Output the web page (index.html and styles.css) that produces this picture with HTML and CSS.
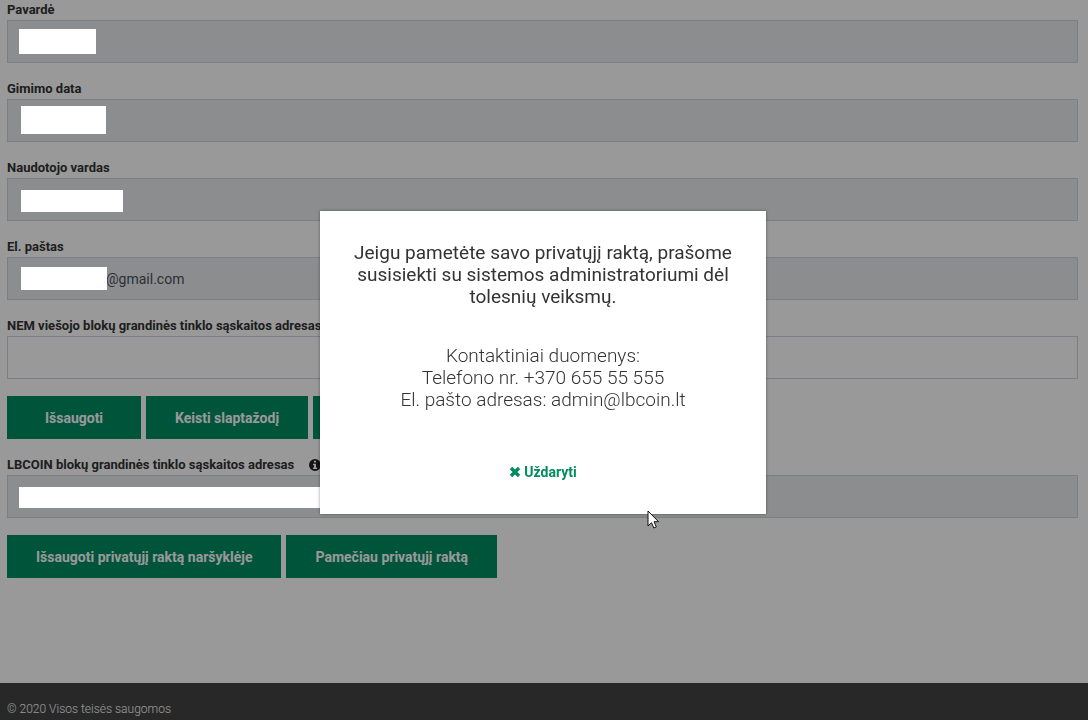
FILE: index.html
```html
<!DOCTYPE html>
<html lang="lt">

<head>
    <meta charset="UTF-8">
    <meta name="viewport" content="width=device-width, initial-scale=1.0">
    <title>LBCOIN</title>
    <link rel="stylesheet" href="styles.css">
</head>

<body>
    <main class="profile">
        <form>
            <div class="field">
                <label for="surname">Pavardė</label>
                <div class="control">
                    <input type="text" id="surname" disabled>
                    <span class="mask mask-surname"></span>
                </div>
            </div>
            <div class="field">
                <label for="birth">Gimimo data</label>
                <div class="control">
                    <input type="text" id="birth" disabled>
                    <span class="mask mask-birth"></span>
                </div>
            </div>
            <div class="field">
                <label for="username">Naudotojo vardas</label>
                <div class="control">
                    <input type="text" id="username" disabled>
                    <span class="mask mask-username"></span>
                </div>
            </div>
            <div class="field">
                <label for="email">El. paštas</label>
                <div class="control">
                    <input type="text" id="email" class="email" value="@gmail.com" disabled>
                    <span class="mask mask-email"></span>
                </div>
            </div>
            <div class="field">
                <label for="nem">NEM viešojo blokų grandinės tinklo sąskaitos adresas</label>
                <div class="control">
                    <input type="text" id="nem">
                </div>
            </div>
            <div class="actions">
                <button type="button" class="btn">Išsaugoti</button>
                <button type="button" class="btn">Keisti slaptažodį</button>
                <button type="button" class="btn" aria-label="Atšaukti"></button>
            </div>
            <div class="field">
                <label for="lbcoin">LBCOIN blokų grandinės tinklo sąskaitos adresas
                    <svg class="info" viewBox="0 0 12 12" aria-hidden="true">
                        <path fill-rule="evenodd" d="M6 0a6 6 0 1 0 0 12A6 6 0 0 0 6 0zM5 1.8h2v1.7H5zM4 4.8h3v3.7h1V10H4V8.500h1V6.200H4z"/>
                    </svg>
                </label>
                <div class="control">
                    <input type="text" id="lbcoin" disabled>
                    <span class="mask mask-lbcoin"></span>
                </div>
            </div>
            <div class="actions">
                <button type="button" class="btn">Išsaugoti privatųjį raktą naršyklėje</button>
                <button type="button" class="btn">Pamečiau privatųjį raktą</button>
            </div>
        </form>
    </main>
    <footer class="footer">© 2020 Visos teisės saugomos</footer>

    <div class="backdrop"></div>
    <div class="modal-wrap">
        <div class="modal" role="dialog" aria-modal="true" aria-labelledby="modal-title">
            <h2 id="modal-title">Jeigu pametėte savo privatųjį raktą, prašome susisiekti su sistemos administratoriumi dėl tolesnių veiksmų.</h2>
            <p>Kontaktiniai duomenys:<br>Telefono nr. +370 655 55 555<br>El. pašto adresas: admin@lbcoin.lt</p>
            <button type="button" class="close">
                <svg viewBox="0 0 12 12" aria-hidden="true">
                    <path d="M3.200.8L6 3.600 8.800.8l2.400 2.400L8.400 6l2.800 2.800-2.400 2.400L6 8.400l-2.800 2.800L.8 8.800 3.600 6 .8 3.200z"/>
                </svg>
                Uždaryti
            </button>
        </div>
    </div>
    <svg class="cursor" viewBox="0 0 12 19" aria-hidden="true">
        <path d="M1 1v15l3.500-3.300 2.300 5.300 2.500-1.100L7 11.700h4.500z"/>
    </svg>
</body>

</html>
```

FILE: styles.css
```css
* {
    box-sizing: border-box;
}

body {
    margin: 0;
    min-height: 100vh;
    display: flex;
    flex-direction: column;
    font-family: Roboto, "Liberation Sans", sans-serif;
    font-size: 14px;
    color: #333;
    background-color: #fff;
}

.profile {
    flex: 1;
    padding: 0 10px 0 7px;
}

.field {
    margin-bottom: 16px;
}

label {
    display: flex;
    align-items: center;
    gap: 15px;
    font-size: 13px;
    font-weight: 700;
    line-height: 20px;
}

.info {
    width: 12px;
    height: 12px;
    fill: #222;
}

.control {
    position: relative;
}

input {
    display: block;
    width: 100%;
    height: 43px;
    padding: 0 12px;
    border: 1px solid #ced4da;
    font-family: inherit;
    font-size: 14px;
    color: #495057;
    background-color: #fff;
}

input:disabled {
    background-color: #e9ecef;
}

.email {
    padding-left: 98px;
}

/* covers for private values, kept above the backdrop */
.mask {
    position: absolute;
    z-index: 11;
    background-color: #fff;
}

.mask-surname {
    left: 12px;
    top: 9px;
    width: 77px;
    height: 25px;
}

.mask-birth {
    left: 14px;
    top: 7px;
    width: 85px;
    height: 28px;
}

.mask-username {
    left: 14px;
    top: 12px;
    width: 102px;
    height: 22px;
}

.mask-email {
    left: 14px;
    top: 10px;
    width: 86px;
    height: 23px;
}

.mask-lbcoin {
    left: 12px;
    top: 12px;
    width: 40%;
    height: 21px;
}

.actions {
    display: flex;
    gap: 5px;
    margin: 17px 0 16px;
}

.btn {
    min-width: 134px;
    height: 43px;
    padding: 0 29px;
    border: none;
    font-family: inherit;
    font-size: 14px;
    font-weight: 700;
    color: #fff;
    background-color: #008c5f;
}

.footer {
    padding: 16px 7px 1px;
    font-size: 12px;
    font-weight: 300;
    line-height: 20px;
    color: #fff;
    background-color: #444;
}

.backdrop {
    position: fixed;
    inset: 0;
    z-index: 10;
    background-color: rgba(0, 0, 0, 0.4);
}

.modal-wrap {
    position: fixed;
    inset: 0;
    z-index: 20;
    display: flex;
    align-items: center;
    justify-content: center;
    padding: 5px 2px 0 0;
}

.modal {
    width: 446px;
    padding: 31px 32px 32px;
    text-align: center;
    background-color: #fff;
    box-shadow: 0 0 3px rgba(0, 0, 0, 0.4);
}

.modal h2,
.modal p {
    margin: 0;
    font-size: 19px;
    line-height: 22px;
}

.modal h2 {
    font-weight: 400;
}

.modal p {
    margin: 37px 0 51px;
    font-weight: 300;
}

.close {
    display: inline-flex;
    align-items: center;
    gap: 3px;
    padding: 0;
    border: none;
    font-family: inherit;
    font-size: 14px;
    font-weight: 700;
    line-height: 20px;
    color: #008c5f;
    background: none;
}

.close svg {
    width: 12px;
    height: 12px;
    fill: #008c5f;
}

.cursor {
    position: absolute;
    left: 647px;
    top: 510px;
    z-index: 30;
    width: 12px;
    height: 19px;
    fill: #fff;
    stroke: #111;
}
```
